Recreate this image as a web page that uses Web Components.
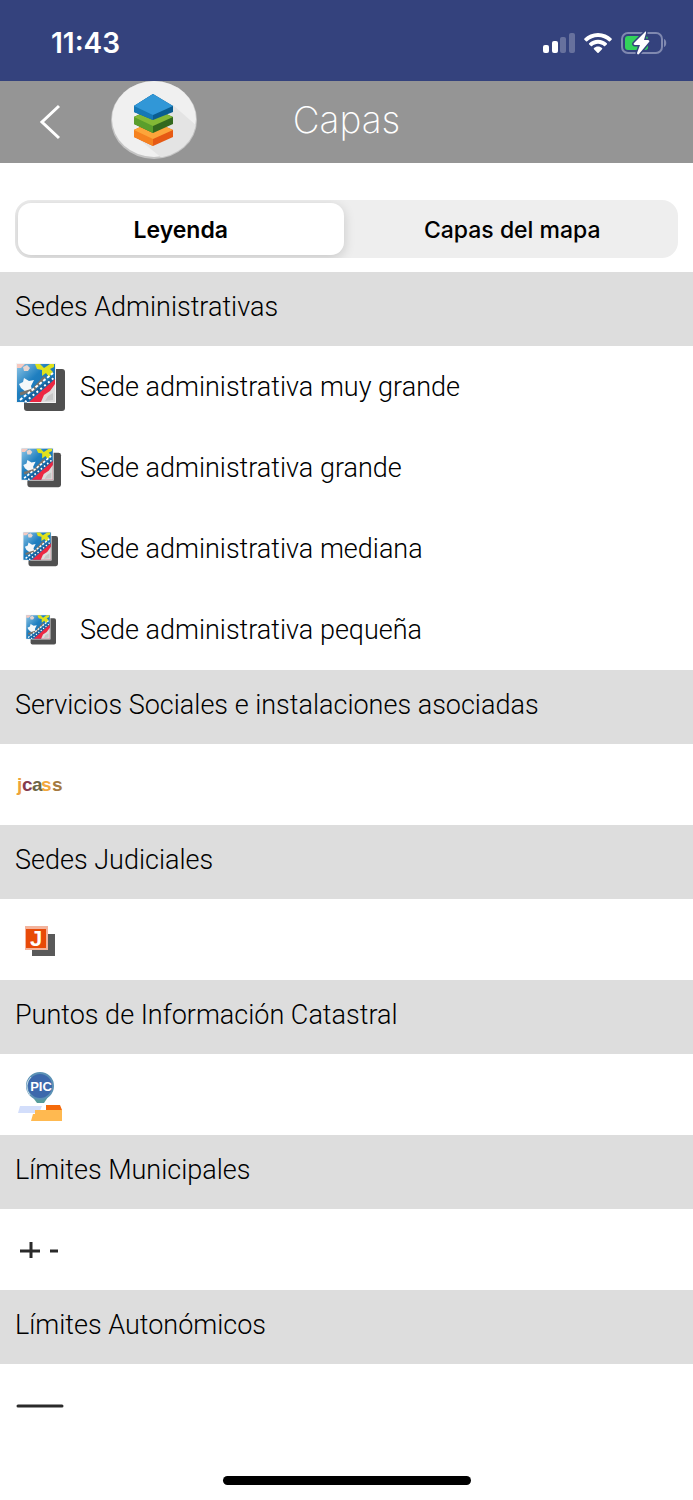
<!DOCTYPE html>
<html lang="es">
<head>
<meta charset="utf-8">
<meta name="viewport" content="width=device-width, initial-scale=1">
<title>Capas</title>
<style>
    html, body {
        margin: 0;
        background: #ffffff;
    }
    body {
        font-family: Inter, "Liberation Sans", Arial, sans-serif;
        color: #000000;
    }
</style>
</head>
<body>

<cc-pantalla>
    <cc-barra-estado slot="estado" hora="11:43"></cc-barra-estado>
    <cc-barra-navegacion slot="navegacion">Capas</cc-barra-navegacion>
    <cc-segmentos slot="segmentos" opciones="Leyenda|Capas del mapa" activo="0"></cc-segmentos>

    <cc-seccion titulo="Sedes Administrativas">
        <cc-fila icono="sede" medida="50">Sede administrativa muy grande</cc-fila>
        <cc-fila icono="sede" medida="41">Sede administrativa grande</cc-fila>
        <cc-fila icono="sede" medida="36">Sede administrativa mediana</cc-fila>
        <cc-fila icono="sede" medida="31">Sede administrativa pequeña</cc-fila>
    </cc-seccion>
    <cc-seccion titulo="Servicios Sociales e instalaciones asociadas">
        <cc-fila icono="icass" medida="50"></cc-fila>
    </cc-seccion>
    <cc-seccion titulo="Sedes Judiciales">
        <cc-fila icono="judicial" medida="50"></cc-fila>
    </cc-seccion>
    <cc-seccion titulo="Puntos de Información Catastral">
        <cc-fila icono="pic" medida="50"></cc-fila>
    </cc-seccion>
    <cc-seccion titulo="Límites Municipales">
        <cc-fila icono="municipal" medida="50"></cc-fila>
    </cc-seccion>
    <cc-seccion titulo="Límites Autonómicos">
        <cc-fila icono="autonomico" medida="50"></cc-fila>
    </cc-seccion>
</cc-pantalla>

<script>
//dibujos de la leyenda, todos en una caja de 50 x 50
const ICONOS = {
    sede: `
        <defs>
            <linearGradient id="azul" x1="0" y1="0" x2="1" y2="1">
                <stop offset="0" stop-color="#8fc6e6"/>
                <stop offset=".4" stop-color="#1f7fc0"/>
                <stop offset="1" stop-color="#1568a8"/>
            </linearGradient>
        </defs>
        <rect x="9" y="7" width="41" height="42" rx="3" fill="#505050"/>
        <rect x="1" y="1" width="40" height="40" fill="#f4f4f4"/>
        <rect x="2" y="2" width="38" height="38" fill="url(#azul)"/>
        <path d="M2 2h8l-4 4H2z" fill="#f6c9c0"/>
        <path d="M8 5l4-2 3 3-2 3H9z" fill="#e9d5cf"/>
        <path d="M20 2h5l4 4 6-4h4v3l-4 2 3 3-4 5-3-4-4 3 0-6-5-1z" fill="#dfe21d"/>
        <path d="M4 22l4-2 1-4 5 3 5-1-3 6 1 4-6 2-5-4z" fill="#f4f8fa"/>
        <path d="M5 32l13-4 12-13" fill="none" stroke="#77736c" stroke-width="3"/>
        <path d="M5 38L38 11" fill="none" stroke="#ffffff" stroke-width="2" stroke-dasharray="3 2"/>
        <path d="M9 40L39 16" fill="none" stroke="#16609c" stroke-width="4"/>
        <path d="M10 40L40 15" fill="none" stroke="#ffffff" stroke-width="2" stroke-dasharray="2 3"/>
        <path d="M14 40L40 17v23z" fill="#ec2742"/>
        <path d="M26 40l3-7 6-4 5-7v18z" fill="#dcdcdc"/>
        <path d="M30 39l3-5 5-3v7z" fill="#c6c6c6"/>`,
    icass: `
        <g font-family="Liberation Sans, Arial, sans-serif" font-size="19" font-weight="700">
            <text x="2" y="31" fill="#eda23a">j</text>
            <text x="7" y="31" fill="#853b4e">c</text>
            <text x="17" y="31" fill="#6d6647">a</text>
            <text x="26" y="31" fill="#f3a93d">s</text>
            <text x="37" y="31" fill="#a5793f">s</text>
        </g>`,
    judicial: `
        <rect x="17" y="19" width="23" height="22" fill="#595959"/>
        <rect x="10" y="11" width="23" height="24" fill="#f3b39c"/>
        <rect x="11" y="14" width="20" height="19" fill="#e84a08"/>
        <text x="15" y="31" font-family="Liberation Sans, Arial, sans-serif" font-size="22" font-weight="700" fill="#ffffff">J</text>`,
    pic: `
        <path d="M5 36h22l-3 7H3z" fill="#d3defb"/>
        <path d="M31 35h14l2 5H31z" fill="#f56a0a"/>
        <path d="M20 40h27v11H16l2-7h2z" fill="#ffb950"/>
        <path d="M13 21h24l-8 12h-7z" fill="#559c9b"/>
        <circle cx="25" cy="16" r="13" fill="#3c68ac" stroke="#5b91b5" stroke-width="2"/>
        <path d="M16 7a13 13 0 0 0-1 18" fill="none" stroke="#c9dcea" stroke-width="1"/>
        <text x="26" y="21" text-anchor="middle" font-family="Liberation Sans, Arial, sans-serif" font-size="13" font-weight="700" fill="#ffffff">PIC</text>`,
    municipal: `
        <path d="M5 26h20M16 17v16M35 26h8" fill="none" stroke="#2a2a2a" stroke-width="3"/>`,
    autonomico: `
        <path d="M3 26h44" fill="none" stroke="#2a2a2a" stroke-width="3" stroke-linecap="round"/>`
};

//la pantalla completa: barras, contenido e indicador inferior
class CcPantalla extends HTMLElement {
    constructor() {
        super();
        this._root = this.attachShadow({ mode: 'open' });
    }

    connectedCallback() {
        this._root.innerHTML = `
        <style>
            :host {
                display: flex;
                flex-direction: column;
                min-height: 100vh;
            }
            .control {
                padding: 37px 15px 14px;
            }
            footer {
                margin-top: auto;
                padding: 20px 0 15px;
            }
            .indicador {
                width: 248px;
                height: 9px;
                margin: 0 auto;
                border-radius: 5px;
                background: #000000;
            }
        </style>
        <slot name="estado"></slot>
        <slot name="navegacion"></slot>
        <div class="control"><slot name="segmentos"></slot></div>
        <main><slot></slot></main>
        <footer><div class="indicador"></div></footer>
    `;
    }
}

class CcBarraEstado extends HTMLElement {
    constructor() {
        super();
        this._root = this.attachShadow({ mode: 'open' });
    }

    connectedCallback() {
        this._root.innerHTML = `
        <style>
            :host {
                display: flex;
                align-items: center;
                justify-content: space-between;
                box-sizing: border-box;
                height: 81px;
                padding: 5px 26px 0 51px;
                background: #34427d;
                color: #ffffff;
            }
            time {
                font-size: 28px;
                font-weight: 600;
            }
            .iconos {
                display: flex;
                align-items: center;
                gap: 9px;
            }
            svg {
                display: block;
            }
        </style>
        <time></time>
        <div class="iconos">
            <svg width="32" height="22" viewBox="0 0 32 22" fill="#ffffff">
                <rect x="0" y="13" width="6" height="8" rx="2"/>
                <rect x="9" y="9" width="6" height="12" rx="2"/>
                <rect x="17" y="5" width="6" height="16" rx="2" opacity=".25"/>
                <rect x="26" y="1" width="6" height="20" rx="2" opacity=".25"/>
            </svg>
            <svg width="28" height="22" viewBox="0 0 28 22" fill="#ffffff">
                <path d="M14 1C8.600 1 3.700 3.100.4 6.500c-.4.400-.4.900 0 1.200l1.600 1.600c.3.300.8.300 1.200 0C6 6.600 9.800 5 14 5s8 1.600 10.800 4.300c.4.300.9.300 1.200 0l1.600-1.600c.4-.3.400-.8 0-1.200C24.300 3.100 19.400 1 14 1z"/>
                <path d="M14 7.800c-3.400 0-6.500 1.300-8.800 3.500-.4.400-.4.800 0 1.200l1.700 1.600c.3.400.8.300 1.200 0 1.500-1.400 3.600-2.300 5.900-2.300s4.400.9 5.900 2.300c.4.300.9.400 1.200 0l1.700-1.600c.4-.4.400-.8 0-1.200-2.300-2.200-5.400-3.500-8.800-3.500z"/>
                <path d="M14 14.500c-1.600 0-3 .6-4 1.600-.4.400-.4.800 0 1.200l3.400 3.400c.4.400.8.400 1.200 0l3.400-3.400c.4-.4.400-.8 0-1.200-1-1-2.400-1.600-4-1.600z"/>
            </svg>
            <svg width="46" height="24" viewBox="0 0 46 24">
                <rect x="1" y="2" width="40" height="20" rx="6" fill="none" stroke="#8089b0" stroke-width="2"/>
                <path d="M43 8c3 1 3 7 0 8z" fill="#8089b0"/>
                <rect x="4" y="5" width="23" height="14" rx="3" fill="#32d35b"/>
                <path d="M24 1L13 12c-1 1 0 2 1 2h5l-3 8c0 1 1 2 2 1l10-12c1-1 0-2-1-2h-4l2-7c0-1 0-2-1-1z" fill="#ffffff" stroke="#34427d" stroke-width="3" stroke-linejoin="round" paint-order="stroke"/>
            </svg>
        </div>
    `;
        this._root.querySelector('time').textContent = this.getAttribute('hora');
    }
}

class CcBarraNavegacion extends HTMLElement {
    constructor() {
        super();
        this._root = this.attachShadow({ mode: 'open' });
    }

    connectedCallback() {
        this._root.innerHTML = `
        <style>
            :host {
                display: grid;
                grid-template-columns: 1fr auto 1fr;
                align-items: center;
                height: 82px;
                background: #959595;
                color: #ffffff;
            }
            .izquierda {
                display: flex;
                align-items: center;
                gap: 41px;
                padding-left: 30px;
            }
            button {
                width: 40px;
                height: 60px;
                padding: 0;
                border: 0;
                background: none;
            }
            svg {
                display: block;
                margin: 0 auto;
            }
            .logo {
                margin: 0 0 4px;
            }
            h1 {
                margin: 0 0 4px;
                font-size: 37px;
                font-weight: 200;
                line-height: 48px;
            }
        </style>
        <div class="izquierda">
            <button type="button" aria-label="Volver">
                <svg width="22" height="36" viewBox="0 0 22 36">
                    <path d="M20 2L3 18l17 16" fill="none" stroke="#ffffff" stroke-width="3"/>
                </svg>
            </button>
            <svg class="logo" width="86" height="78" viewBox="0 0 86 78">
                <defs>
                    <clipPath id="disco"><ellipse cx="43" cy="39" rx="42" ry="38"/></clipPath>
                </defs>
                <ellipse cx="43" cy="39" rx="43" ry="39" fill="#c4c4c4"/>
                <ellipse cx="43" cy="38" rx="42" ry="38" fill="#f0f0f0"/>
                <path d="M62 24l24 21v33H52L24 55z" fill="#e4e4e4" clip-path="url(#disco)"/>
                <path d="M23 49l19-9 20 9v7l-20 9-19-9z" fill="#e65a14"/>
                <path d="M23 49l19-9v25l-19-9z" fill="#f58220"/>
                <path d="M23 49l19-9 20 9-20 9z" fill="#fda53a"/>
                <path d="M23 36l19-9 20 9v7l-20 9-19-9z" fill="#33691e"/>
                <path d="M23 36l19-9v25l-19-9z" fill="#5a9e2c"/>
                <path d="M23 36l19-9 20 9-20 9z" fill="#83b936"/>
                <path d="M23 25l19-12 20 12v6l-20 8-19-8z" fill="#0a5d91"/>
                <path d="M23 25l19-12v26l-19-8z" fill="#1678b5"/>
                <path d="M23 25l19-12 20 12-20 9z" fill="#3197d7"/>
            </svg>
        </div>
        <h1><slot></slot></h1>
    `;
    }
}

//control con dos o mas opciones
class CcSegmentos extends HTMLElement {
    constructor() {
        super();
        this._root = this.attachShadow({ mode: 'open' });
    }

    static get observedAttributes() {
        return ["activo"];
    }

    connectedCallback() {
        this._root.innerHTML = `
        <style>
            :host {
                display: flex;
                gap: 6px;
                box-sizing: border-box;
                height: 58px;
                padding: 3px;
                border-radius: 16px;
                background: #eeeeee;
                overflow: hidden;
            }
            button {
                flex: 1;
                padding: 2px 0 0;
                border: 0;
                border-radius: 13px;
                background: none;
                color: #000000;
                font-family: inherit;
                font-size: 23px;
                font-weight: 500;
            }
            button[aria-pressed="true"] {
                background: #ffffff;
                font-weight: 600;
                box-shadow: 0 3px 12px rgba(0, 0, 0, .16);
            }
        </style>
    `;
        this.getAttribute('opciones').split('|').forEach((opcion, i) => {
            const boton = document.createElement('button');
            boton.type = 'button';
            boton.textContent = opcion;
            boton.addEventListener('click', () => this.setAttribute('activo', i));
            this._root.appendChild(boton);
        });
        this.marcar();
    }

    attributeChangedCallback() {
        this.marcar();
    }

    marcar() {
        const activo = Number(this.getAttribute('activo'));
        this._root.querySelectorAll('button').forEach((boton, i) => {
            boton.setAttribute('aria-pressed', i === activo);
        });
    }
}

class CcSeccion extends HTMLElement {
    constructor() {
        super();
        this._root = this.attachShadow({ mode: 'open' });
    }

    connectedCallback() {
        this._root.innerHTML = `
        <style>
            :host {
                display: block;
            }
            h2 {
                margin: 0;
                padding: 15px 15px 19px;
                background: #dddddd;
                font-family: Roboto, "Liberation Sans", sans-serif;
                font-size: 27px;
                font-weight: 300;
                line-height: 40px;
            }
        </style>
        <h2></h2>
        <slot></slot>
    `;
        this._root.querySelector('h2').textContent = this.getAttribute('titulo');
    }
}

class CcFila extends HTMLElement {
    constructor() {
        super();
        this._root = this.attachShadow({ mode: 'open' });
    }

    connectedCallback() {
        const medida = this.getAttribute('medida');
        this._root.innerHTML = `
        <style>
            :host {
                display: flex;
                align-items: center;
                gap: 15px;
                min-height: 81px;
                padding: 0 15px;
                font-family: Roboto, "Liberation Sans", sans-serif;
                font-size: 27px;
                font-weight: 300;
                line-height: 40px;
            }
            .icono {
                display: flex;
                justify-content: center;
                width: 50px;
            }
            svg {
                overflow: visible;
            }
        </style>
        <div class="icono">
            <svg width="${medida}" height="${medida}" viewBox="0 0 50 50">${ICONOS[this.getAttribute('icono')]}</svg>
        </div>
        <span><slot></slot></span>
    `;
    }
}

//registro de las clases
window.customElements.define('cc-pantalla', CcPantalla);
window.customElements.define('cc-barra-estado', CcBarraEstado);
window.customElements.define('cc-barra-navegacion', CcBarraNavegacion);
window.customElements.define('cc-segmentos', CcSegmentos);
window.customElements.define('cc-seccion', CcSeccion);
window.customElements.define('cc-fila', CcFila);
</script>
</body>
</html>
